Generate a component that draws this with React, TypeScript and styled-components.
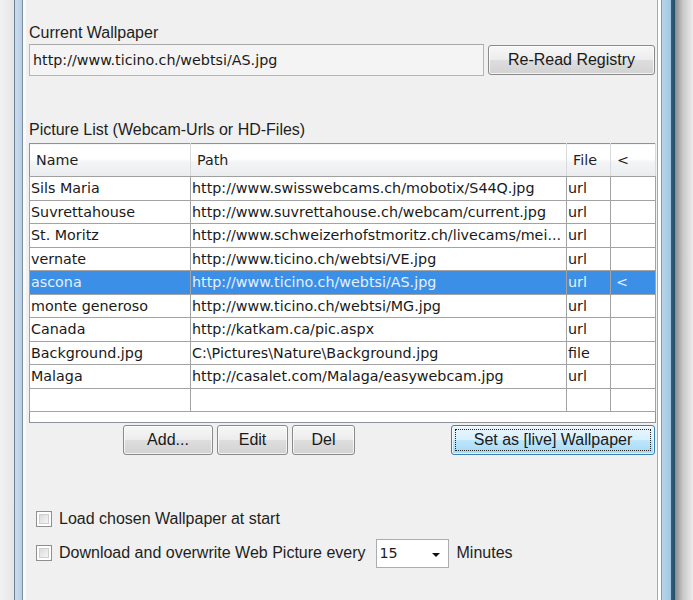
import styled, { createGlobalStyle } from "styled-components";

const GlobalStyle = createGlobalStyle`
  html, body {
    margin: 0;
    padding: 0;
    background: #ececec;
  }
  body {
    font-family: "Liberation Sans", Arial, sans-serif;
  }
`;

const Desktop = styled.div`
  display: flex;
  width: 693px;
  height: 600px;
  overflow: hidden;
  background: #ececec;
`;

const DesktopGap = styled.div`
  width: 14px;
  background: linear-gradient(to right, #f2f2f2, #e6e6e6);
`;

const FrameLeft = styled.div`
  width: 12px;
  box-sizing: border-box;
  border-left: 1px solid #6f8092;
  background: linear-gradient(
    to right,
    #c9dced 0,
    #b9cfe6 7px,
    #7d8fa3 7px,
    #7d8fa3 8px,
    #fafafa 8px
  );
`;

const FrameRight = styled.div`
  width: 18px;
  background: linear-gradient(
    to right,
    #a9a9a9 0,
    #a9a9a9 1px,
    #ffffff 1px,
    #ffffff 4px,
    #8b9aa8 4px,
    #8b9aa8 5px,
    #b7d5ea 5px,
    #a2c6df 14px,
    #2f5f7d 14px,
    #234d68 18px
  );
`;

const Shadow = styled.div`
  flex: 1;
  background: linear-gradient(to right, #8a8a8a, #c9c9c9 45%, #ececec);
`;

const Content = styled.div`
  width: 631px;
  background: #f0f0f0;
  padding: 0 2px 0 3px;
  box-sizing: border-box;
  display: flex;
  flex-direction: column;
`;

const Label = styled.div<{ $top: number }>`
  margin-top: ${(p) => p.$top}px;
  height: 18px;
  line-height: 18px;
  font-size: 16px;
  color: #1e1e1e;
`;

const WallpaperRow = styled.div`
  display: flex;
  align-items: center;
  gap: 4px;
  margin-top: 2px;
  height: 32px;
`;

const TextField = styled.div`
  width: 455px;
  height: 32px;
  box-sizing: border-box;
  border: 1px solid #b5b5b5;
  border-top-color: #a9a9a9;
  background: #f4f4f4;
  padding-left: 3px;
  display: flex;
  align-items: center;
  font-family: "DejaVu Sans", Tahoma, sans-serif;
  font-size: 14.3px;
  color: #1a1a1a;
`;

const Button = styled.button<{ $w: number; $focus?: boolean }>`
  width: ${(p) => p.$w}px;
  height: 30px;
  box-sizing: border-box;
  border: 1px solid ${(p) => (p.$focus ? "#3c7fb1" : "#8a8a8a")};
  border-radius: 3px;
  padding: 0;
  font-family: "Liberation Sans", Arial, sans-serif;
  font-size: 16px;
  color: #1a1a1a;
  position: relative;
  background: ${(p) =>
    p.$focus
      ? "linear-gradient(to bottom, #eaf6fd 0%, #d9f0fc 50%, #bee6fd 50%, #a7d9f5 100%)"
      : "linear-gradient(to bottom, #f7f7f7 0%, #ececec 50%, #dedede 50%, #d2d2d2 100%)"};
  box-shadow: inset 0 0 0 1px rgba(255, 255, 255, 0.7);
`;

const FocusRing = styled.span`
  position: absolute;
  inset: 3px;
  border: 1px dotted #222;
  pointer-events: none;
`;

const Table = styled.table`
  margin-top: 4px;
  width: 626px;
  border-collapse: collapse;
  table-layout: fixed;
  border: 1px solid #8e9399;
  background: #ffffff;
  font-family: "DejaVu Sans", Tahoma, sans-serif;
  font-size: 14.3px;
`;

const Col = styled.col<{ $w: number }>`
  width: ${(p) => p.$w}px;
`;

const HeadCell = styled.th`
  height: 32px;
  padding: 0 0 0 6px;
  text-align: left;
  font-weight: normal;
  color: #1e1e1e;
  background: linear-gradient(to bottom, #ffffff 0%, #ffffff 45%, #f3f4f5 55%, #eaecee 100%);
  border-right: 1px solid #d8dadd;
  border-bottom: 1px solid #a0a0a0;
  white-space: nowrap;
  overflow: hidden;
`;

const Row = styled.tr<{ $selected?: boolean }>`
  height: 23.5px;
  background: ${(p) => (p.$selected ? "#3b8fe6" : "#ffffff")};
  color: ${(p) => (p.$selected ? "#e4f1ff" : "#1a1a1a")};
`;

const Cell = styled.td<{ $pad?: number }>`
  padding: 0 0 0 ${(p) => p.$pad ?? 1}px;
  border: 1px solid #a3a3a3;
  border-top: none;
  white-space: nowrap;
  overflow: hidden;
  line-height: 22px;
`;

const FillerCell = styled.td`
  height: 10px;
  padding: 0;
`;

const ButtonRow = styled.div`
  display: flex;
  justify-content: space-between;
  align-items: center;
  margin-top: 1px;
  padding-left: 94px;
  height: 31px;
`;

const ButtonGroup = styled.div`
  display: flex;
  gap: 4px;
`;

const Options = styled.div`
  margin-top: 52px;
  padding-left: 7px;
  display: flex;
  flex-direction: column;
  gap: 10px;
`;

const OptionRow = styled.div`
  display: flex;
  align-items: center;
  height: 24px;
  font-size: 16px;
  color: #1e1e1e;
`;

const CheckBox = styled.span`
  width: 16px;
  height: 16px;
  box-sizing: border-box;
  border: 1px solid #8f8f8f;
  background: #ffffff;
  margin-right: 7px;
  display: flex;
  padding: 2px;

  &::after {
    content: "";
    flex: 1;
    border: 1px solid #cfcfcf;
    background: linear-gradient(135deg, #dcdcdc, #f6f6f6);
  }
`;

const Combo = styled.div`
  width: 73px;
  height: 29px;
  box-sizing: border-box;
  margin: 0 8px 0 10px;
  border: 1px solid #abadb3;
  background: #ffffff;
  display: flex;
  align-items: center;
  justify-content: space-between;
  padding: 0 8px 0 3px;
  font-family: "DejaVu Sans", Tahoma, sans-serif;
  font-size: 14.3px;
`;

const Arrow = styled.span`
  width: 0;
  height: 0;
  border-left: 4px solid transparent;
  border-right: 4px solid transparent;
  border-top: 4px solid #111;
  margin-top: 3px;
`;

const pictures = [
  { name: "Sils Maria", path: "http://www.swisswebcams.ch/mobotix/S44Q.jpg", type: "url" },
  { name: "Suvrettahouse", path: "http://www.suvrettahouse.ch/webcam/current.jpg", type: "url" },
  { name: "St. Moritz", path: "http://www.schweizerhofstmoritz.ch/livecams/mei...", type: "url" },
  { name: "vernate", path: "http://www.ticino.ch/webtsi/VE.jpg", type: "url" },
  { name: "ascona", path: "http://www.ticino.ch/webtsi/AS.jpg", type: "url", live: true },
  { name: "monte generoso", path: "http://www.ticino.ch/webtsi/MG.jpg", type: "url" },
  { name: "Canada", path: "http://katkam.ca/pic.aspx", type: "url" },
  { name: "Background.jpg", path: "C:\\Pictures\\Nature\\Background.jpg", type: "file" },
  { name: "Malaga", path: "http://casalet.com/Malaga/easywebcam.jpg", type: "url" },
  { name: "", path: "", type: "" },
];

export default function App() {
  return (
    <Desktop>
      <GlobalStyle />
      <DesktopGap />
      <FrameLeft />
      <Content>
        <Label $top={24}>Current Wallpaper</Label>
        <WallpaperRow>
          <TextField>http://www.ticino.ch/webtsi/AS.jpg</TextField>
          <Button $w={167}>Re-Read Registry</Button>
        </WallpaperRow>
        <Label $top={45}>Picture List (Webcam-Urls or HD-Files)</Label>
        <Table>
          <colgroup>
            <Col $w={161} />
            <Col $w={376} />
            <Col $w={44} />
            <Col $w={45} />
          </colgroup>
          <thead>
            <tr>
              <HeadCell>Name</HeadCell>
              <HeadCell>Path</HeadCell>
              <HeadCell>File</HeadCell>
              <HeadCell>&lt;</HeadCell>
            </tr>
          </thead>
          <tbody>
            {pictures.map((p, i) => (
              <Row key={i} $selected={p.live}>
                <Cell>{p.name}</Cell>
                <Cell>{p.path}</Cell>
                <Cell>{p.type}</Cell>
                <Cell $pad={5}>{p.live ? "<" : ""}</Cell>
              </Row>
            ))}
            <tr>
              <FillerCell colSpan={4} />
            </tr>
          </tbody>
        </Table>
        <ButtonRow>
          <ButtonGroup>
            <Button $w={90}>Add...</Button>
            <Button $w={71}>Edit</Button>
            <Button $w={63}>Del</Button>
          </ButtonGroup>
          <Button $w={204} $focus>
            <FocusRing />
            Set as [live] Wallpaper
          </Button>
        </ButtonRow>
        <Options>
          <OptionRow>
            <CheckBox />
            Load chosen Wallpaper at start
          </OptionRow>
          <OptionRow>
            <CheckBox />
            Download and overwrite Web Picture every
            <Combo>
              15
              <Arrow />
            </Combo>
            Minutes
          </OptionRow>
        </Options>
      </Content>
      <FrameRight />
      <Shadow />
    </Desktop>
  );
}
